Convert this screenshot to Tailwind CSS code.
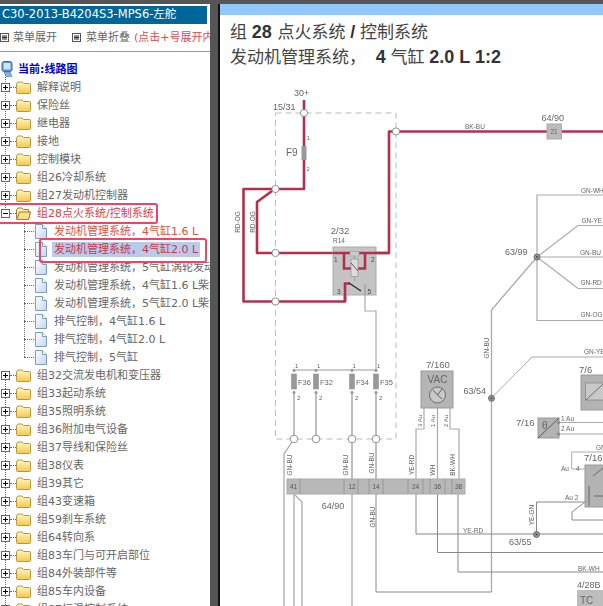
<!doctype html>
<html lang="zh">
  <head>
    <title>C30-2013-B4204S3-MPS6</title>
    <meta charset="UTF-8" />
    <script src="https://cdn.jsdelivr.net/npm/@tailwindcss/browser@4"></script>
  </head>
  <body class="h-screen overflow-hidden bg-white font-['Liberation_Sans','Noto_Sans_CJK_SC',sans-serif]">
    <svg class="absolute h-0 w-0">
      <defs>
        <linearGradient id="fold" x1="0" y1="0" x2="0" y2="1">
          <stop offset="0" stop-color="#fff6c8" />
          <stop offset="1" stop-color="#f5c84a" />
        </linearGradient>
        <linearGradient id="page" x1="0" y1="0" x2="1" y2="1">
          <stop offset="0" stop-color="#ffffff" />
          <stop offset="1" stop-color="#c2d6f2" />
        </linearGradient>
        <symbol id="plus" viewBox="0 0 9 9">
          <rect x="0.5" y="0.5" width="8" height="8" fill="#fff" stroke="#666" />
          <path d="M2 4.5h5M4.5 2v5" stroke="#000" />
        </symbol>
        <symbol id="minus" viewBox="0 0 9 9">
          <rect x="0.5" y="0.5" width="8" height="8" fill="#fff" stroke="#666" />
          <path d="M2 4.5h5" stroke="#000" />
        </symbol>
        <symbol id="folder" viewBox="0 0 15 13">
          <path d="M0.5 3 L2 1 H6 L7.5 2.5 H13.5 Q14.5 2.5 14.5 3.5 V11.5 Q14.5 12.5 13.5 12.5 H1.5 Q0.5 12.5 0.5 11.5 Z" fill="url(#fold)" stroke="#b8963c" />
        </symbol>
        <symbol id="folder-open" viewBox="0 0 15 13">
          <path d="M0.5 3 L2 1 H6 L7.5 2.5 H12.5 V5 H14.5 L12.5 12.5 H1.5 Q0.5 12.5 0.5 11.5 Z" fill="url(#fold)" stroke="#a08030" />
          <path d="M3.5 5 H14.5 L12.5 12.5 H1 Z" fill="#fbe08a" stroke="#a08030" />
        </symbol>
        <symbol id="doc" viewBox="0 0 13 15">
          <path d="M1.5 0.5 H8.5 L12.5 4.5 V14.5 H1.5 Z" fill="url(#page)" stroke="#7f9db9" />
          <path d="M8.5 0.5 V4.5 H12.5" fill="#fff" stroke="#7f9db9" />
        </symbol>
        <symbol id="lines" viewBox="0 0 9 9">
          <rect x="0.5" y="0.5" width="8" height="8" fill="#fff" stroke="#555" />
          <path d="M2 3h5M2 4.5h5M2 6h5" stroke="#222" />
        </symbol>
      </defs>
    </svg>

    <div class="h-[4px] bg-[#555]"></div>
    <div class="flex h-[602px]">
      <!-- left tree -->
      <aside class="relative w-[210px] shrink-0 overflow-hidden bg-white font-['DejaVu_Sans','Noto_Sans_CJK_SC',sans-serif] text-[11px] leading-none text-[#666]">
        <div class="mt-[2px] mr-[3px] flex h-[18px] items-center whitespace-nowrap bg-[#006699] pl-[2px] text-[11.5px] text-white">C30-2013-B4204S3-MPS6-左舵</div>
        <div class="flex h-[28px] items-center whitespace-nowrap border-b border-[#999] text-[11px]">
          <svg class="h-[9px] w-[9px] shrink-0"><use href="#lines" /></svg>
          <span class="ml-[4px]">菜单展开</span>
          <svg class="ml-[15px] h-[9px] w-[9px] shrink-0"><use href="#lines" /></svg>
          <span class="ml-[5px]">菜单折叠</span>
          <span class="ml-[4px] text-[#e04858]">(点击+号展开内容)</span>
        </div>

        <div class="relative mt-[8px]">
          <i class="absolute top-[8px] left-[5px] h-[140px] border-l border-dotted border-[#666]"></i>
          <i class="absolute top-[315px] left-[5px] h-[260px] border-l border-dotted border-[#666]"></i>
          <i class="absolute top-[162px] left-[24px] h-[135px] border-l border-dotted border-[#666]"></i>

          <div class="relative flex h-[18px] items-center pl-[1px]">
            <svg class="h-[16px] w-[12px]" viewBox="0 0 12 16">
              <rect x="1" y="0.5" width="10" height="10" rx="2" fill="#5f93d6" stroke="#3d6cab" />
              <rect x="2.5" y="2" width="7" height="6.5" fill="#cfe3fa" />
              <path d="M3 11h6l2 4.5H5Z" fill="#8fb2e0" stroke="#4a76b2" stroke-width="0.6" />
            </svg>
            <span class="ml-[5px] text-[11px] font-bold text-[#0000cc]">当前:线路图</span>
          </div>

          <div class="relative flex h-[18px] items-center pl-[1px]"><svg class="h-[9px] w-[9px]"><use href="#plus" /></svg><i class="w-[6px] border-t border-dotted border-[#666]"></i><svg class="h-[13px] w-[15px]"><use href="#folder" /></svg><span class="ml-[6px]">解释说明</span></div>
          <div class="relative flex h-[18px] items-center pl-[1px]"><svg class="h-[9px] w-[9px]"><use href="#plus" /></svg><i class="w-[6px] border-t border-dotted border-[#666]"></i><svg class="h-[13px] w-[15px]"><use href="#folder" /></svg><span class="ml-[6px]">保险丝</span></div>
          <div class="relative flex h-[18px] items-center pl-[1px]"><svg class="h-[9px] w-[9px]"><use href="#plus" /></svg><i class="w-[6px] border-t border-dotted border-[#666]"></i><svg class="h-[13px] w-[15px]"><use href="#folder" /></svg><span class="ml-[6px]">继电器</span></div>
          <div class="relative flex h-[18px] items-center pl-[1px]"><svg class="h-[9px] w-[9px]"><use href="#plus" /></svg><i class="w-[6px] border-t border-dotted border-[#666]"></i><svg class="h-[13px] w-[15px]"><use href="#folder" /></svg><span class="ml-[6px]">接地</span></div>
          <div class="relative flex h-[18px] items-center pl-[1px]"><svg class="h-[9px] w-[9px]"><use href="#plus" /></svg><i class="w-[6px] border-t border-dotted border-[#666]"></i><svg class="h-[13px] w-[15px]"><use href="#folder" /></svg><span class="ml-[6px]">控制模块</span></div>
          <div class="relative flex h-[18px] items-center pl-[1px]"><svg class="h-[9px] w-[9px]"><use href="#plus" /></svg><i class="w-[6px] border-t border-dotted border-[#666]"></i><svg class="h-[13px] w-[15px]"><use href="#folder" /></svg><span class="ml-[6px]">组26冷却系统</span></div>
          <div class="relative flex h-[18px] items-center pl-[1px]"><svg class="h-[9px] w-[9px]"><use href="#plus" /></svg><i class="w-[6px] border-t border-dotted border-[#666]"></i><svg class="h-[13px] w-[15px]"><use href="#folder" /></svg><span class="ml-[6px]">组27发动机控制器</span></div>
          <div class="relative flex h-[18px] items-center pl-[1px]"><svg class="h-[9px] w-[9px]"><use href="#minus" /></svg><i class="w-[6px] border-t border-dotted border-[#666]"></i><svg class="h-[13px] w-[15px]"><use href="#folder-open" /></svg><span class="ml-[6px] text-[#d8404f]">组28点火系统/控制系统</span></div>

          <div class="relative flex h-[18px] items-center whitespace-nowrap pl-[24px]"><i class="w-[10px] shrink-0 border-t border-dotted border-[#666]"></i><svg class="h-[15px] w-[13px] shrink-0"><use href="#doc" /></svg><span class="ml-[7px] text-[#e0503c]">发动机管理系统，4气缸1.6 L</span></div>
          <div class="relative flex h-[18px] items-center whitespace-nowrap pl-[24px]"><i class="w-[10px] shrink-0 border-t border-dotted border-[#666]"></i><svg class="h-[15px] w-[13px] shrink-0"><use href="#doc" /></svg><span class="ml-[5px] bg-[#b9cbe8] py-[2px] pr-[2px] pl-[2px] text-[#cf3348]">发动机管理系统，4气缸2.0 L</span></div>
          <div class="relative flex h-[18px] items-center whitespace-nowrap pl-[24px]"><i class="w-[10px] shrink-0 border-t border-dotted border-[#666]"></i><svg class="h-[15px] w-[13px] shrink-0"><use href="#doc" /></svg><span class="ml-[7px]">发动机管理系统，5气缸涡轮发动机</span></div>
          <div class="relative flex h-[18px] items-center whitespace-nowrap pl-[24px]"><i class="w-[10px] shrink-0 border-t border-dotted border-[#666]"></i><svg class="h-[15px] w-[13px] shrink-0"><use href="#doc" /></svg><span class="ml-[7px]">发动机管理系统，4气缸1.6 L柴油</span></div>
          <div class="relative flex h-[18px] items-center whitespace-nowrap pl-[24px]"><i class="w-[10px] shrink-0 border-t border-dotted border-[#666]"></i><svg class="h-[15px] w-[13px] shrink-0"><use href="#doc" /></svg><span class="ml-[7px]">发动机管理系统，5气缸2.0 L柴油</span></div>
          <div class="relative flex h-[18px] items-center whitespace-nowrap pl-[24px]"><i class="w-[10px] shrink-0 border-t border-dotted border-[#666]"></i><svg class="h-[15px] w-[13px] shrink-0"><use href="#doc" /></svg><span class="ml-[7px]">排气控制，4气缸1.6 L</span></div>
          <div class="relative flex h-[18px] items-center whitespace-nowrap pl-[24px]"><i class="w-[10px] shrink-0 border-t border-dotted border-[#666]"></i><svg class="h-[15px] w-[13px] shrink-0"><use href="#doc" /></svg><span class="ml-[7px]">排气控制，4气缸2.0 L</span></div>
          <div class="relative flex h-[18px] items-center whitespace-nowrap pl-[24px]"><i class="w-[10px] shrink-0 border-t border-dotted border-[#666]"></i><svg class="h-[15px] w-[13px] shrink-0"><use href="#doc" /></svg><span class="ml-[7px]">排气控制，5气缸</span></div>

          <div class="relative flex h-[18px] items-center pl-[1px]"><svg class="h-[9px] w-[9px]"><use href="#plus" /></svg><i class="w-[6px] border-t border-dotted border-[#666]"></i><svg class="h-[13px] w-[15px]"><use href="#folder" /></svg><span class="ml-[6px]">组32交流发电机和变压器</span></div>
          <div class="relative flex h-[18px] items-center pl-[1px]"><svg class="h-[9px] w-[9px]"><use href="#plus" /></svg><i class="w-[6px] border-t border-dotted border-[#666]"></i><svg class="h-[13px] w-[15px]"><use href="#folder" /></svg><span class="ml-[6px]">组33起动系统</span></div>
          <div class="relative flex h-[18px] items-center pl-[1px]"><svg class="h-[9px] w-[9px]"><use href="#plus" /></svg><i class="w-[6px] border-t border-dotted border-[#666]"></i><svg class="h-[13px] w-[15px]"><use href="#folder" /></svg><span class="ml-[6px]">组35照明系统</span></div>
          <div class="relative flex h-[18px] items-center pl-[1px]"><svg class="h-[9px] w-[9px]"><use href="#plus" /></svg><i class="w-[6px] border-t border-dotted border-[#666]"></i><svg class="h-[13px] w-[15px]"><use href="#folder" /></svg><span class="ml-[6px]">组36附加电气设备</span></div>
          <div class="relative flex h-[18px] items-center pl-[1px]"><svg class="h-[9px] w-[9px]"><use href="#plus" /></svg><i class="w-[6px] border-t border-dotted border-[#666]"></i><svg class="h-[13px] w-[15px]"><use href="#folder" /></svg><span class="ml-[6px]">组37导线和保险丝</span></div>
          <div class="relative flex h-[18px] items-center pl-[1px]"><svg class="h-[9px] w-[9px]"><use href="#plus" /></svg><i class="w-[6px] border-t border-dotted border-[#666]"></i><svg class="h-[13px] w-[15px]"><use href="#folder" /></svg><span class="ml-[6px]">组38仪表</span></div>
          <div class="relative flex h-[18px] items-center pl-[1px]"><svg class="h-[9px] w-[9px]"><use href="#plus" /></svg><i class="w-[6px] border-t border-dotted border-[#666]"></i><svg class="h-[13px] w-[15px]"><use href="#folder" /></svg><span class="ml-[6px]">组39其它</span></div>
          <div class="relative flex h-[18px] items-center pl-[1px]"><svg class="h-[9px] w-[9px]"><use href="#plus" /></svg><i class="w-[6px] border-t border-dotted border-[#666]"></i><svg class="h-[13px] w-[15px]"><use href="#folder" /></svg><span class="ml-[6px]">组43变速箱</span></div>
          <div class="relative flex h-[18px] items-center pl-[1px]"><svg class="h-[9px] w-[9px]"><use href="#plus" /></svg><i class="w-[6px] border-t border-dotted border-[#666]"></i><svg class="h-[13px] w-[15px]"><use href="#folder" /></svg><span class="ml-[6px]">组59刹车系统</span></div>
          <div class="relative flex h-[18px] items-center pl-[1px]"><svg class="h-[9px] w-[9px]"><use href="#plus" /></svg><i class="w-[6px] border-t border-dotted border-[#666]"></i><svg class="h-[13px] w-[15px]"><use href="#folder" /></svg><span class="ml-[6px]">组64转向系</span></div>
          <div class="relative flex h-[18px] items-center pl-[1px]"><svg class="h-[9px] w-[9px]"><use href="#plus" /></svg><i class="w-[6px] border-t border-dotted border-[#666]"></i><svg class="h-[13px] w-[15px]"><use href="#folder" /></svg><span class="ml-[6px]">组83车门与可开启部位</span></div>
          <div class="relative flex h-[18px] items-center pl-[1px]"><svg class="h-[9px] w-[9px]"><use href="#plus" /></svg><i class="w-[6px] border-t border-dotted border-[#666]"></i><svg class="h-[13px] w-[15px]"><use href="#folder" /></svg><span class="ml-[6px]">组84外装部件等</span></div>
          <div class="relative flex h-[18px] items-center pl-[1px]"><svg class="h-[9px] w-[9px]"><use href="#plus" /></svg><i class="w-[6px] border-t border-dotted border-[#666]"></i><svg class="h-[13px] w-[15px]"><use href="#folder" /></svg><span class="ml-[6px]">组85车内设备</span></div>
          <div class="relative flex h-[18px] items-center pl-[1px]"><svg class="h-[9px] w-[9px]"><use href="#plus" /></svg><i class="w-[6px] border-t border-dotted border-[#666]"></i><svg class="h-[13px] w-[15px]"><use href="#folder" /></svg><span class="ml-[6px]">组87恒温控制系统</span></div>
        </div>

        <!-- red annotation marks drawn over the tree -->
        <div class="absolute top-[199px] left-[-6px] h-[21px] w-[164px] rounded-[3px] border-[2.5px] border-[#ee4466]"></div>
        <div class="absolute top-[234px] left-[39px] h-[25px] w-[168px] rounded-[3px] border-[2.5px] border-[#ee4466]"></div>
      </aside>

      <div class="flex w-[10px] shrink-0"><div class="w-[8px] bg-[#555]"></div><div class="w-[2px] bg-[#111]"></div></div>

      <!-- right document -->
      <main class="flex-1 overflow-hidden bg-white">
        <div class="h-[11px] bg-[#90c8ff]"></div>
        <div class="h-[60px] whitespace-nowrap pt-[5px] pl-[10px] text-[17px] leading-[25px] text-[#444]">
          <div>组 <b class="text-[18px] text-[#333]">28</b> <span class="ml-[1px]">点火系统</span> <b class="text-[18px] text-[#333]">/</b> 控制系统</div>
          <div>发动机管理系统， <b class="ml-[5px] text-[18px] text-[#333]">4</b> 气缸 <b class="text-[18px] text-[#333]">2.0 L 1:2</b></div>
        </div>
        <svg class="block h-[531px] w-[383px] blur-[0.35px]" viewBox="220 75 383 531" font-family="Liberation Sans" fill="#666" font-size="10">
          <!-- dashed fuse box -->
          <path d="M275.5 113H396V439H275.5Z" fill="none" stroke="#bbb" stroke-width="1" stroke-dasharray="6 4" />

          <!-- thin wires -->
          <g fill="none" stroke="#aaa" stroke-width="1.2">
            <path d="M294 370H376" stroke="#999" />
            <path d="M294 392V439M316 392V439M352 392V439M376 392V439" stroke-width="1.5" />
            <path d="M294 439L284 454V606M294 494V606M295 495L302 502V606M352 494V606" stroke-width="1.3" />
            <path d="M352 439V479M376 439V479" stroke-width="1.5" />
            <path d="M365 295V311H376V370" />
            <path d="M424 407V429H416V479M437.5 407V479M450 407V429H459V479" />
            <path d="M537 195V320.5H603M537 195H603M537 257H603M537 257L578 225.5H603M537 257L578 288.5H603" stroke-width="1.2" />
            <path d="M537 257L491.5 310V592" stroke-width="1.3" />
            <path d="M491.5 398L532 357H603" stroke-width="1" />
          </g>
          <g fill="none" stroke="#888" stroke-width="1">
            <path d="M376 494V592H491.5" />
            <path d="M416 494V534H603" />
            <path d="M437.5 494V552.5H603" />
            <path d="M458 494V572H603" />
            <path d="M536.5 534V502H585L572 512V520H603" />
            <path d="M559 422.5H603M559 434H603" stroke="#aaa" />
            <path d="M585 469H571.7V452H603" stroke="#aaa" />
          </g>

          <!-- red wires -->
          <g fill="none" stroke="#b2304c" stroke-width="2.6" stroke-linejoin="round">
            <path d="M304 100V189H275.5H243.5V301.5H345V283.5H350" />
            <path d="M272 191L257 202V253H389V131.5H603" />
            <path d="M344 253V268.5H365V253" />
          </g>

          <!-- junctions -->
          <g fill="#fff" stroke="#777" stroke-width="0.8">
            <circle cx="304" cy="113" r="3.6" />
            <circle cx="396" cy="131.5" r="3.6" />
            <circle cx="275.5" cy="189" r="3.6" />
            <circle cx="275.5" cy="253" r="3.6" />
            <circle cx="275.5" cy="301.5" r="3.6" />
            <circle cx="294" cy="439" r="3.8" />
            <circle cx="316" cy="439" r="3.8" />
            <circle cx="352" cy="439" r="3.8" />
            <circle cx="376" cy="439" r="3.8" />
          </g>
          <g fill="#999" stroke="#555" stroke-width="0.8">
            <circle cx="537" cy="257" r="3" />
            <circle cx="491.5" cy="398.3" r="3" />
            <circle cx="536.5" cy="534.5" r="3" />
          </g>
          <g fill="#444">
            <circle cx="537" cy="257" r="1" />
            <circle cx="491.5" cy="398.3" r="1" />
            <circle cx="536.5" cy="534.5" r="1" />
          </g>

          <!-- labels top -->
          <text x="294" y="96" font-size="9">30+</text>
          <text x="273" y="110" font-size="9">15/31</text>
          <text x="306.5" y="140" font-size="6">1</text>
          <text x="306.5" y="171" font-size="6">2</text>
          <text x="286" y="156">F9</text>
          <rect x="301.5" y="146" width="5" height="14" fill="#999" />
          <text x="465" y="129" font-size="6.5">BK-BU</text>
          <text x="541.5" y="121" font-size="9">64/90</text>
          <rect x="547" y="124" width="14.5" height="15" fill="#bbb" stroke="#aaa" />
          <text x="554" y="134" font-size="6.5" text-anchor="middle">21</text>

          <text x="581" y="192.5" font-size="6.5">GN-WH</text>
          <text x="581.5" y="223" font-size="6.5">GN-YE</text>
          <text x="580" y="254.5" font-size="6.5">GN-BU</text>
          <text x="580.5" y="285" font-size="6.5">GN-RD</text>
          <text x="580.5" y="317" font-size="6.5">GN-OG</text>
          <text x="505" y="255" font-size="9">63/99</text>
          <text transform="translate(239.5 222) rotate(-90)" font-size="6.5" text-anchor="middle">RD-OG</text>
          <text transform="translate(254.5 222) rotate(-90)" font-size="6.5" text-anchor="middle">RD-OG</text>

          <!-- relay R14 -->
          <text x="340" y="234" text-anchor="middle" font-size="9.5">2/32</text>
          <text x="339" y="242.5" text-anchor="middle" font-size="6.5">R14</text>
          <rect x="333" y="247" width="43" height="48" fill="#c4c4c4" stroke="#aaa" />
          <path d="M333 253H389M344 253V268.5H365V253" fill="none" stroke="#b2304c" stroke-width="2.6" />
          <rect x="350" y="251.5" width="9" height="4.5" fill="#ccc" stroke="#999" stroke-width="0.5" />
          <path d="M354.5 256V259M354.5 276.5V281" stroke="#999" stroke-width="0.8" />
          <rect x="351" y="259" width="7" height="17.5" fill="#ddd" stroke="#888" stroke-width="0.6" />
          <path d="M351 263L358 271" stroke="#333" stroke-width="0.8" />
          <path d="M345 301.5V283.5H350" fill="none" stroke="#b2304c" stroke-width="2.6" />
          <path d="M349 283L361 291" stroke="#222" stroke-width="1.2" />
          <path d="M365 295V284" stroke="#888" stroke-width="0.8" />
          <g font-size="6.5" fill="#444">
            <text x="334" y="261.5">1</text>
            <text x="371" y="261.5">2</text>
            <text x="337" y="293.5">3</text>
            <text x="367.5" y="293.5">5</text>
          </g>

          <!-- fuses -->
          <g fill="#999" stroke="#888" stroke-width="0.5">
            <rect x="291.5" y="374" width="5" height="15" />
            <rect x="313.5" y="374" width="5" height="15" />
            <rect x="349.5" y="374" width="5" height="15" />
            <rect x="373.5" y="374" width="5" height="15" />
            <circle cx="294" cy="370.5" r="1.2" />
            <circle cx="316" cy="370.5" r="1.2" />
            <circle cx="352" cy="370.5" r="1.2" />
            <circle cx="376" cy="370.5" r="1.2" />
            <circle cx="294" cy="392.5" r="1.2" />
            <circle cx="316" cy="392.5" r="1.2" />
            <circle cx="352" cy="392.5" r="1.2" />
            <circle cx="376" cy="392.5" r="1.2" />
          </g>
          <g font-size="7.5">
            <text x="298" y="385">F36</text>
            <text x="320" y="385">F32</text>
            <text x="356" y="385">F34</text>
            <text x="380" y="385">F35</text>
          </g>
          <g font-size="6">
            <text x="295" y="368">1</text>
            <text x="317" y="368">1</text>
            <text x="352.5" y="368">1</text>
            <text x="377" y="368">1</text>
            <text x="297" y="400">2</text>
            <text x="319" y="400">2</text>
            <text x="355" y="400">2</text>
            <text x="379" y="400">2</text>
          </g>

          <!-- VAC -->
          <text x="426" y="368" font-size="9.5">7/160</text>
          <rect x="421" y="371" width="32" height="37" fill="#b5b5b5" stroke="#999" />
          <text x="437.5" y="383" text-anchor="middle" font-size="10">VAC</text>
          <circle cx="437.5" cy="395" r="8" fill="#c9c9c9" stroke="#555" stroke-width="0.8" />
          <path d="M433 390L437.5 395L442 399M437.5 395L442 389" fill="none" stroke="#444" stroke-width="0.8" />
          <g font-size="6">
            <text transform="translate(422 427) rotate(-90)">3 Au</text>
            <text transform="translate(435 427) rotate(-90)">1 Au</text>
            <text transform="translate(448 427) rotate(-90)">2 Au</text>
          </g>
          <g font-size="6.5" text-anchor="middle">
            <text transform="translate(292 465) rotate(-90)">GN-BU</text>
            <text transform="translate(348 465) rotate(-90)">GN-BU</text>
            <text transform="translate(374 463) rotate(-90)">GN-BU</text>
            <text transform="translate(414 465) rotate(-90)">YE-RD</text>
            <text transform="translate(435 470) rotate(-90)">WH</text>
            <text transform="translate(455 465) rotate(-90)">BK-WH</text>
            <text transform="translate(489 348) rotate(-90)">GN-BU</text>
            <text transform="translate(375 517) rotate(-90)">GN-BU</text>
            <text transform="translate(534 515) rotate(-90)">YE-GN</text>
          </g>

          <!-- connector 64/90 -->
          <rect x="287" y="479" width="178" height="15" fill="#b8b8b8" stroke="#aaa" />
          <path d="M300 479V494M344 479V494M358 479V494M369 479V494M383 479V494M408 479V494M423 479V494M430 479V494M445 479V494M452 479V494" stroke="#8f8f8f" stroke-width="0.8" />
          <g font-size="6.5" text-anchor="middle" fill="#555">
            <text x="293.5" y="489">41</text>
            <text x="352" y="489">12</text>
            <text x="376" y="489">14</text>
            <text x="415.5" y="489">24</text>
            <text x="437.5" y="489">36</text>
            <text x="458.5" y="489">38</text>
          </g>
          <text x="333" y="509" font-size="9" text-anchor="middle">64/90</text>

          <!-- right side components -->
          <text x="463.5" y="393.5" font-size="9">63/54</text>
          <text x="584" y="354" font-size="6.5">GN-YE</text>
          <text x="579" y="372.5" font-size="9.5">7/6</text>
          <rect x="581" y="375" width="24" height="35" fill="#b3b3b3" stroke="#999" />
          <rect x="585.5" y="383" width="19" height="17" fill="#c9c9c9" stroke="#777" stroke-width="0.6" />
          <path d="M586 400L604 383" stroke="#555" stroke-width="0.8" />

          <text x="516" y="425.5" font-size="9.5">7/16</text>
          <rect x="538" y="418" width="21" height="20" fill="#b3b3b3" stroke="#999" />
          <path d="M538 438L559 418" stroke="#444" stroke-width="0.8" />
          <text x="542" y="429" font-size="10">θ</text>
          <circle cx="558.5" cy="422.5" r="1.2" fill="#999" stroke="#666" stroke-width="0.5" />
          <circle cx="558.5" cy="434" r="1.2" fill="#999" stroke="#666" stroke-width="0.5" />
          <text x="561" y="421" font-size="6.5">1 Au</text>
          <text x="561" y="431" font-size="6.5">2 Au</text>

          <text x="596" y="450" font-size="6.5">GN</text>
          <text x="584" y="461" font-size="9.5">7/16</text>
          <text x="561" y="471" font-size="6.5">Au</text>
          <text x="576" y="471" font-size="6.5">4</text>
          <rect x="585" y="465" width="20" height="42" fill="#b3b3b3" stroke="#999" />
          <path d="M589 486V506M593 476L603 468M594 496h9" stroke="#555" stroke-width="0.8" fill="none" />
          <text x="565" y="500" font-size="6.5">Au 2</text>

          <text x="463" y="533" font-size="6.5">YE-RD</text>
          <text x="509" y="545" font-size="9">63/55</text>
          <text x="578" y="570.5" font-size="6.5">BK-WH</text>
          <text x="577" y="588" font-size="9">4/28B</text>
          <rect x="577" y="590" width="30" height="18" fill="#bdbdbd" />
          <text x="580" y="604" font-size="10">TC</text>
        </svg>
      </main>
    </div>
  </body>
</html>
